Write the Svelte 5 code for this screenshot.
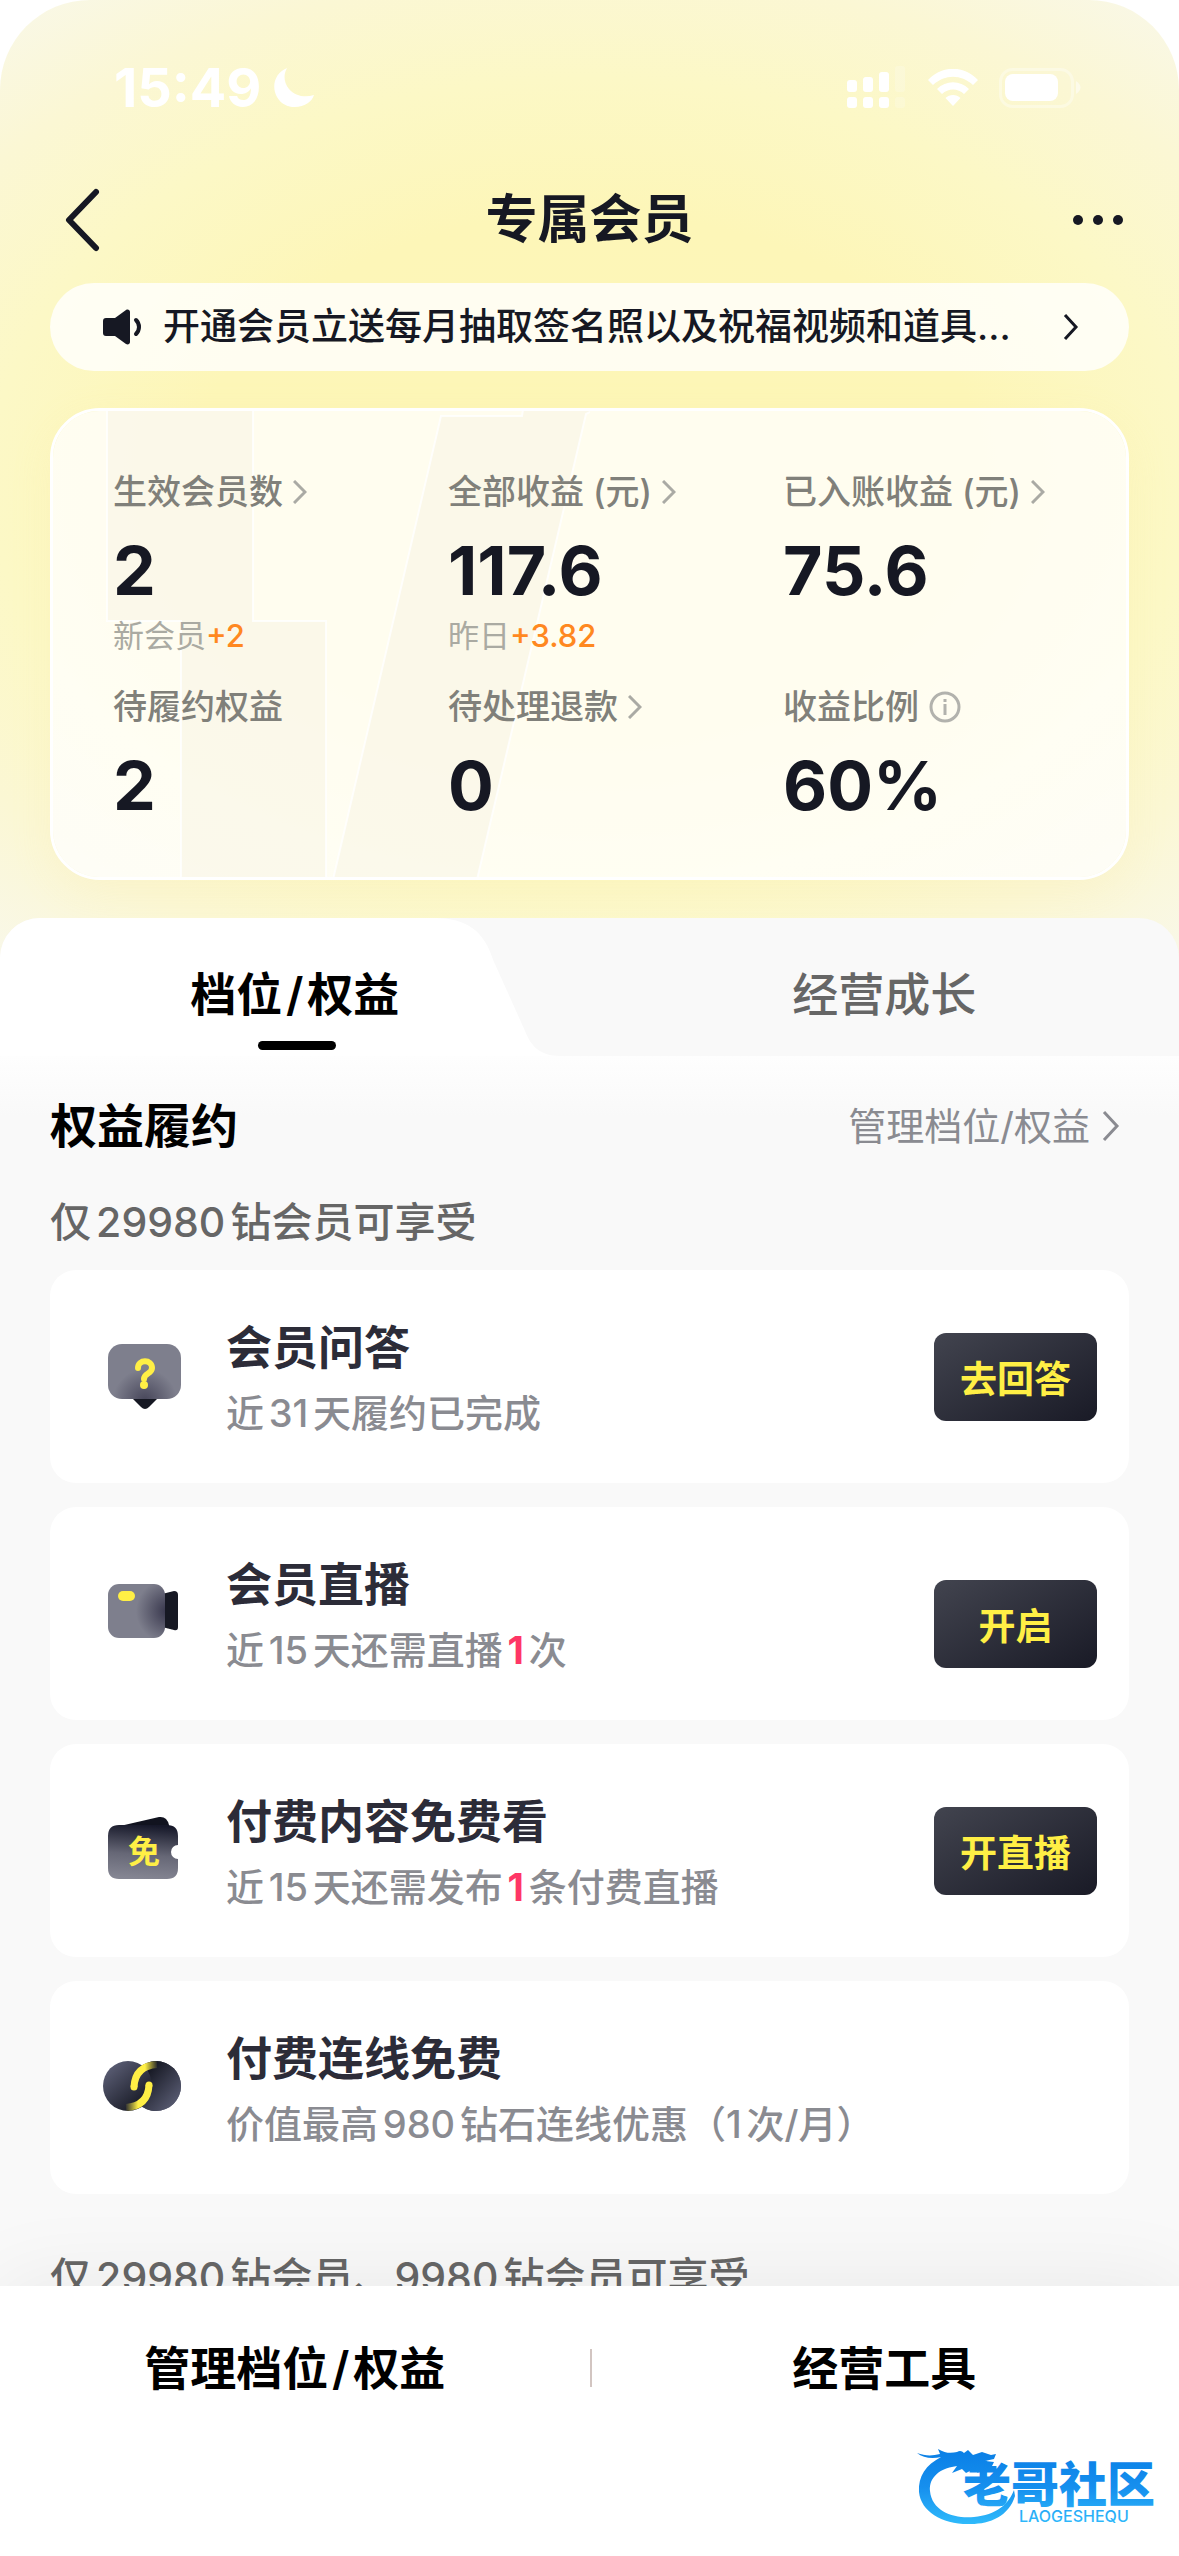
<script lang="ts">
	interface Metric {
		label: string;
		value: string;
		arrow?: boolean;
		info?: boolean;
		note?: string;
		delta?: string;
	}

	interface Benefit {
		icon: 'question' | 'camera' | 'ticket' | 'link';
		title: string;
		before: string;
		count?: string;
		after?: string;
		action?: string;
		low?: boolean;
	}

	const metrics: Metric[] = [
		{ label: '生效会员数', value: '2', arrow: true, note: '新会员', delta: '+2' },
		{ label: '全部收益 (元)', value: '117.6', arrow: true, note: '昨日', delta: '+3.82' },
		{ label: '已入账收益 (元)', value: '75.6', arrow: true },
		{ label: '待履约权益', value: '2' },
		{ label: '待处理退款', value: '0', arrow: true },
		{ label: '收益比例', value: '60%', info: true }
	];

	const benefits: Benefit[] = [
		{ icon: 'question', title: '会员问答', before: '近31天履约已完成', action: '去回答' },
		{ icon: 'camera', title: '会员直播', before: '近15天还需直播', count: '1', after: '次', action: '开启', low: true },
		{ icon: 'ticket', title: '付费内容免费看', before: '近15天还需发布', count: '1', after: '条付费直播', action: '开直播' },
		{ icon: 'link', title: '付费连线免费', before: '价值最高980钻石连线优惠（1次/月）' }
	];

	// hair spaces keep the slash clear of the characters beside it
	const tabs = ['档位\u200a/\u200a权益', '经营成长'];
	const manageLabel = '管理档位\u200a/\u200a权益';
	let activeTab = $state(0);
</script>

<div class="page">
	<div class="status">
		<div class="clock">
			<span>15:49</span>
			<svg width="42" height="42" viewBox="0 0 42 42" aria-hidden="true">
				<path d="M14 1C2 6-2 19 4 30s21 13 31 6c3-2 5-5 6-8-9 3-19 1-25-6-5-6-6-14-2-21z" fill="#fff" />
			</svg>
		</div>
		<div class="signals">
			<svg width="60" height="44" viewBox="0 0 60 44" fill="#fff" aria-hidden="true">
				<rect x="0" y="14" width="10" height="12" rx="3" />
				<rect x="16" y="11" width="10" height="15" rx="3" />
				<rect x="32" y="6" width="10" height="20" rx="3" />
				<rect x="48" y="0" width="10" height="26" rx="3" opacity=".2" />
				<rect x="0" y="31" width="10" height="11" rx="3" />
				<rect x="16" y="31" width="10" height="11" rx="3" />
				<rect x="32" y="31" width="10" height="11" rx="3" />
				<rect x="48" y="31" width="10" height="11" rx="3" opacity=".2" />
			</svg>
			<svg width="50" height="38" viewBox="0 0 50 38" fill="#fff" aria-hidden="true">
				<path d="M0 11C14-4 36-4 50 11l-5 5C33 5 17 5 5 16z" />
				<path d="M9 20c9-9 23-9 32 0l-5 5c-6-6-16-6-22 0z" />
				<path d="M17.500 29c4-4 11-4 15 0L25 37z" />
			</svg>
			<svg width="82" height="40" viewBox="0 0 82 40" aria-hidden="true">
				<rect x="1.500" y="1.500" width="72" height="37" rx="12" fill="none" stroke="#fff" stroke-width="3" opacity=".35" />
				<rect x="6" y="6" width="53" height="27" rx="8" fill="#fff" />
				<path d="M77 13c6 4 6 9 0 13z" fill="#fff" opacity=".5" />
			</svg>
		</div>
	</div>

	<header class="nav">
		<button class="icon-button" aria-label="返回">
			<svg width="36" height="64" viewBox="0 0 36 64" fill="none" stroke="#161823" stroke-width="6" stroke-linecap="round" stroke-linejoin="round">
				<path d="M32 4 5 32l27 28" />
			</svg>
		</button>
		<h1>专属会员</h1>
		<button class="icon-button more" aria-label="更多">
			<svg width="54" height="12" viewBox="0 0 54 12" fill="#161823">
				<circle cx="7" cy="6" r="5" />
				<circle cx="27" cy="6" r="5" />
				<circle cx="47" cy="6" r="5" />
			</svg>
		</button>
	</header>

	<a class="notice" href="#notice">
		<svg width="40" height="36" viewBox="0 0 40 36" aria-hidden="true">
			<path d="M3 9h9L23 1c2-1 4 0 4 2v30c0 2-2 3-4 2l-11-8H3c-2 0-3-1-3-3V12c0-2 1-3 3-3z" fill="#161823" />
			<path d="M33 11c4 4 4 10 0 14" fill="none" stroke="#161823" stroke-width="4" stroke-linecap="round" />
		</svg>
		<span class="notice-text">开通会员立送每月抽取签名照以及祝福视频和道具...</span>
		<svg width="16" height="28" viewBox="0 0 16 28" fill="none" stroke="#161823" stroke-width="3" aria-hidden="true">
			<path d="m2 2 11 12L2 26" />
		</svg>
	</a>

	<section class="summary">
		<svg class="summary-art" viewBox="0 0 540 472" aria-hidden="true">
			<g fill="#f8f4e4" fill-opacity=".55" stroke="#fff" stroke-opacity=".8" stroke-width="2">
				<path d="M57-4h146v217h73v263H131V213H57z" />
				<path d="M391 8h81l2-12h82l-20 10-110 470H282z" />
			</g>
		</svg>
		{#each metrics as metric}
			<div class="metric">
				<div class="metric-label">
					{metric.label}
					{#if metric.arrow}
						<svg width="14" height="24" viewBox="0 0 14 24" fill="none" stroke="#aaaaa4" stroke-width="3" aria-hidden="true">
							<path d="m1 1 11 11L1 23" />
						</svg>
					{/if}
					{#if metric.info}
						<svg width="32" height="32" viewBox="0 0 32 32" fill="none" stroke="#b2b2ad" stroke-width="3" aria-hidden="true">
							<circle cx="16" cy="16" r="14" />
							<path d="M16 13v11M16 8v3" />
						</svg>
					{/if}
				</div>
				<div class="metric-value">{metric.value}</div>
				{#if metric.note}
					<div class="metric-note">{metric.note}<b>{metric.delta}</b></div>
				{/if}
			</div>
		{/each}
	</section>

	<div class="tabs" role="tablist">
		<svg class="tab-shape" class:flipped={activeTab === 1} viewBox="0 0 560 138" preserveAspectRatio="none" aria-hidden="true">
			<path d="M0 0h430c32 0 49 13 58 42l32 72c5 13 14 24 34 24H0z" fill="#fff" />
		</svg>
		{#each tabs as tab, i}
			<button role="tab" class="tab" class:active={activeTab === i} aria-selected={activeTab === i} onclick={() => (activeTab = i)}>
				{tab}
			</button>
		{/each}
	</div>

	<main class="content">
		<div class="section-head">
			<h2>权益履约</h2>
			<a href="#manage">
				管理档位/权益
				<svg width="20" height="32" viewBox="0 0 20 32" fill="none" stroke="#8a8b91" stroke-width="3" aria-hidden="true">
					<path d="m3 2 13 14L3 30" />
				</svg>
			</a>
		</div>

		<h3>仅29980钻会员可享受</h3>
		<ul class="benefits">
			{#each benefits as benefit}
				<li class="benefit">
					<svg class="benefit-icon" viewBox="0 0 84 84" aria-hidden="true">
						{#if benefit.icon === 'question'}
							<defs>
								<radialGradient id="bubble" gradientUnits="userSpaceOnUse" cx="43" cy="66" r="32">
									<stop offset="0" stop-color="#464559" />
									<stop offset="1" stop-color="#7e7f8d" />
								</radialGradient>
							</defs>
							<path d="M31 64h24l-8 8q-4 4-8 0z" fill="#161823" />
							<rect x="6" y="9" width="73" height="55" rx="14" fill="url(#bubble)" />
							<path d="M36 33c0-9 14-9 14 0 0 6-8 5-8 11" fill="none" stroke="#ffef45" stroke-width="6" stroke-linecap="round" />
							<circle cx="42" cy="50" r="4" fill="#ffef45" />
						{:else if benefit.icon === 'camera'}
							<defs>
								<radialGradient id="camera" gradientUnits="userSpaceOnUse" cx="66" cy="39" r="32">
									<stop offset="0" stop-color="#35344a" />
									<stop offset="1" stop-color="#7e7f8d" />
								</radialGradient>
							</defs>
							<path d="m60 22 12-3q4 0 4 4v32q0 4-4 3l-12-3z" fill="#161823" />
							<rect x="6" y="12" width="57" height="54" rx="11" fill="url(#camera)" />
							<rect x="16" y="19" width="17" height="10" rx="5" fill="#ffef45" />
						{:else if benefit.icon === 'ticket'}
							<defs>
								<linearGradient id="ticket" x1="0.550" y1="0" x2="0.450" y2="1">
									<stop offset="0" stop-color="#161829" />
									<stop offset=".55" stop-color="#666776" />
									<stop offset="1" stop-color="#858693" />
								</linearGradient>
							</defs>
							<path d="m18 17 39-9q8-1 10 8v8H18z" fill="#11131f" />
							<path d="M17 16h48q11 0 11 11v9a7 7 0 0 0 0 14v9q0 11-11 11H17Q6 70 6 59V27q0-11 11-11z" fill="url(#ticket)" />
							<text x="42" y="54" text-anchor="middle" class="icon-text">免</text>
						{:else}
							<defs>
								<linearGradient id="disc-left" x1=".1" y1=".1" x2=".8" y2=".9">
									<stop offset="0" stop-color="#5b5e75" />
									<stop offset="1" stop-color="#151722" />
								</linearGradient>
								<linearGradient id="disc-right" x1=".2" y1=".1" x2=".9" y2=".9">
									<stop offset="0" stop-color="#151722" />
									<stop offset="1" stop-color="#5b5e75" />
								</linearGradient>
								<linearGradient id="arc-top" gradientUnits="userSpaceOnUse" x1="43" y1="0" x2="56" y2="0">
									<stop offset="0" stop-color="#ffef45" />
									<stop offset="1" stop-color="#ffef45" stop-opacity="0" />
								</linearGradient>
								<linearGradient id="arc-bottom" gradientUnits="userSpaceOnUse" x1="36" y1="0" x2="23" y2="0">
									<stop offset="0" stop-color="#ffef45" />
									<stop offset="1" stop-color="#ffef45" stop-opacity="0" />
								</linearGradient>
							</defs>
							<circle cx="54" cy="40" r="25" fill="url(#disc-right)" />
							<circle cx="26" cy="40" r="25" fill="url(#disc-left)" />
							<path d="M54 15a25 25 0 0 1 0 50c-7 0-10-2-13-4 10-9 12-27 3-39-3-3 3-7 10-7z" fill="url(#disc-right)" />
							<g fill="none" stroke-width="7">
								<path d="M32 41q1-21 23-22.500" stroke="url(#arc-top)" />
								<path d="M47 39q-1 21-23 22.500" stroke="url(#arc-bottom)" />
							</g>
							<circle cx="32" cy="41" r="3.500" fill="#ffef45" />
							<circle cx="47" cy="39" r="3.500" fill="#ffef45" />
						{/if}
					</svg>
					<div class="benefit-body">
						<h4>{benefit.title}</h4>
						<p>{benefit.before}{#if benefit.count}<b>{benefit.count}</b>{benefit.after}{/if}</p>
					</div>
					{#if benefit.action}
						<button class="action" class:low={benefit.low}>{benefit.action}</button>
					{/if}
				</li>
			{/each}
		</ul>

		<h3 class="next">仅29980钻会员、9980钻会员可享受</h3>
	</main>

	<footer class="bottom-bar">
		<a href="#manage">{manageLabel}</a>
		<a href="#tools">经营工具</a>
	</footer>

	<svg class="brand" width="252" height="90" viewBox="0 0 252 90" role="img" aria-label="老哥社区">
		<defs>
			<linearGradient id="brand" gradientUnits="userSpaceOnUse" x1="0" y1="10" x2="0" y2="84">
				<stop offset="0" stop-color="#0a7fe6" />
				<stop offset=".5" stop-color="#168fee" />
				<stop offset="1" stop-color="#2fbafb" />
			</linearGradient>
		</defs>
		<g fill="url(#brand)">
			<path d="M0 13c8 3 15 3 23 1l-2-5c8 5 14 4 19 3 3-2 5-1 7 1l4-3 5 5 9-3 9 3 5-1-2 5-9 2 9 1-3 6-9-1-4 6-4-4-8 4-4-4-10 4 5-7C18 29 12 41 13 51c2 21 25 28 44 26 22-2 35-13 40-27l1 6C92 76 73 84 54 84 26 85 4 72 2 52 1 36 9 25 24 17 15 19 6 18 0 13z" />
			<text x="46" y="62" class="brand-name">老哥社区</text>
			<text x="102" y="82" class="brand-latin">LAOGESHEQU</text>
		</g>
	</svg>
</div>

<style>
	:global(body) {
		margin: 0;
		background: #fff;
	}

	.page {
		position: relative;
		display: flex;
		flex-direction: column;
		height: 100vh;
		overflow: hidden;
		border-radius: 90px 90px 0 0;
		background: radial-gradient(ellipse 880px 590px at 50% 480px, #fdf6b6 0%, #fdf6b8 45%, #fcf8c6 68%, #fbf7d4 86%, #f8f8f0 112%);
		color: #161823;
		font-family: Inter, 'Noto Sans CJK SC', sans-serif;
		text-autospace: normal;
	}

	h1,
	h2,
	h3,
	h4,
	p,
	ul {
		margin: 0;
		padding: 0;
	}

	a {
		color: inherit;
		text-decoration: none;
	}

	button {
		border: 0;
		padding: 0;
		background: none;
		color: inherit;
		font: inherit;
		cursor: pointer;
	}

	svg {
		display: block;
		flex: none;
	}

	.status {
		display: flex;
		flex: none;
		align-items: center;
		justify-content: space-between;
		height: 175px;
		padding: 0 98px 0 114px;
	}

	.clock {
		display: flex;
		align-items: center;
		gap: 12px;
		color: #fff;
		font-size: 54px;
		font-weight: 700;
	}

	.signals {
		display: flex;
		align-items: center;
		gap: 21px;
	}

	.nav {
		display: grid;
		flex: none;
		grid-template-columns: 1fr auto 1fr;
		align-items: center;
		height: 90px;
		padding: 0 54px;
	}

	.icon-button {
		display: flex;
		align-items: center;
		width: 64px;
		height: 88px;
		padding-left: 10px;
	}

	.icon-button.more {
		justify-content: flex-end;
		justify-self: end;
	}

	h1 {
		font-size: 52px;
		font-weight: 600;
		line-height: 72px;
	}

	.notice {
		display: flex;
		flex: none;
		align-items: center;
		height: 88px;
		margin: 18px 50px 0;
		padding: 0 50px 0 53px;
		box-sizing: border-box;
		border-radius: 44px;
		background: rgba(255, 255, 255, 0.8);
	}

	.notice-text {
		flex: 1;
		margin-left: 20px;
		overflow: hidden;
		font-size: 37px;
		font-weight: 500;
		line-height: 50px;
		white-space: nowrap;
	}

	.summary {
		position: relative;
		display: grid;
		flex: none;
		grid-template-columns: repeat(3, 1fr);
		row-gap: 23px;
		margin: 37px 50px 38px;
		padding: 57px 8px 52px 60px;
		border: 3px solid #fff;
		border-radius: 50px;
		background: rgba(255, 255, 255, 0.78);
		background-clip: padding-box;
		box-shadow: 0 12px 40px rgba(250, 225, 140, 0.14);
		overflow: hidden;
	}

	.summary-art {
		position: absolute;
		top: -3px;
		left: -3px;
		height: 472px;
	}

	.metric {
		position: relative;
	}

	.metric-label {
		display: flex;
		align-items: center;
		gap: 10px;
		color: #80807a;
		font-size: 34px;
		font-weight: 500;
		line-height: 48px;
		white-space: nowrap;
	}

	.metric-value {
		margin-top: 14px;
		font-size: 68px;
		font-weight: 700;
		line-height: 80px;
	}

	.metric-note {
		margin-top: 2px;
		color: #aaaaa2;
		font-size: 31px;
		line-height: 48px;
		text-autospace: no-autospace;
	}

	.metric-note b {
		color: #ff8820;
		font-weight: 500;
	}

	.tabs {
		position: relative;
		display: flex;
		flex: none;
		overflow: hidden;
		border-radius: 40px 40px 0 0;
		background: #f9f9f9;
	}

	.tab-shape {
		position: absolute;
		top: 0;
		left: 0;
		width: 48%;
		height: 100%;
	}

	.tab-shape.flipped {
		left: auto;
		right: 0;
		transform: scaleX(-1);
	}

	.tab {
		position: relative;
		flex: 1;
		height: 138px;
		padding-top: 14px;
		box-sizing: border-box;
		color: #666;
		font-size: 46px;
		font-weight: 500;
		line-height: 60px;
	}

	.tab.active {
		color: #000;
		font-weight: 600;
	}

	.tab.active::after {
		content: '';
		position: absolute;
		bottom: 6px;
		left: 50%;
		width: 78px;
		height: 9px;
		margin-left: -37px;
		border-radius: 5px;
		background: #000;
	}

	.content {
		flex: 1;
		min-height: 0;
		padding: 40px 50px 0;
		overflow-y: auto;
		scrollbar-width: none;
		background: linear-gradient(#fefefe, #f9f9f9 60px);
	}

	.section-head {
		display: flex;
		align-items: center;
		justify-content: space-between;
	}

	h2 {
		color: #000;
		font-size: 47px;
		font-weight: 600;
		line-height: 60px;
	}

	.section-head a {
		display: flex;
		align-items: center;
		gap: 11px;
		padding-right: 8px;
		color: #8a8b91;
		font-size: 38px;
		line-height: 50px;
	}

	h3 {
		margin-top: 41px;
		color: #666;
		font-size: 41px;
		font-weight: 500;
		line-height: 50px;
	}

	h3.next {
		margin-top: 58px;
	}

	.benefits {
		display: flex;
		flex-direction: column;
		gap: 24px;
		margin-top: 23px;
		list-style: none;
	}

	.benefit {
		display: flex;
		align-items: center;
		min-height: 213px;
		padding: 0 32px 0 52px;
		box-sizing: border-box;
		border-radius: 26px;
		background: #fff;
	}

	.benefit-icon {
		width: 84px;
		height: 84px;
	}

	.icon-text {
		fill: #ffef45;
		font-size: 32px;
		font-weight: 700;
	}

	.benefit-body {
		flex: 1;
		margin-left: 40px;
		padding-top: 2px;
	}

	h4 {
		color: #2c2c38;
		font-size: 46px;
		font-weight: 600;
		line-height: 60px;
	}

	p {
		margin-top: 11px;
		color: #8a8b91;
		font-size: 38px;
		font-weight: 500;
		line-height: 50px;
	}

	p b {
		color: #fe3666;
		font-weight: 700;
	}

	.action {
		width: 163px;
		height: 88px;
		border-radius: 12px;
		background: linear-gradient(150deg, #42444f, #191a26);
		color: #ffef45;
		font-size: 37px;
		font-weight: 600;
	}

	.action.low {
		margin-top: 20px;
	}

	.bottom-bar {
		position: relative;
		display: flex;
		flex: none;
		padding: 52px 0 158px;
		background: #fff;
		box-shadow: 0 0 90px rgba(0, 0, 0, 0.07);
		color: #000;
		font-size: 46px;
		font-weight: 600;
		line-height: 60px;
		text-align: center;
	}

	.bottom-bar a {
		flex: 1;
	}

	.bottom-bar a + a {
		background: linear-gradient(#d2c5c1, #d2c5c1) left center / 2px 38px no-repeat;
	}

	.brand {
		position: absolute;
		right: 10px;
		bottom: 26px;
	}

	.brand-name {
		font-size: 48px;
		font-weight: 900;
	}

	.brand-latin {
		font-size: 16px;
		font-weight: 500;
	}
</style>
